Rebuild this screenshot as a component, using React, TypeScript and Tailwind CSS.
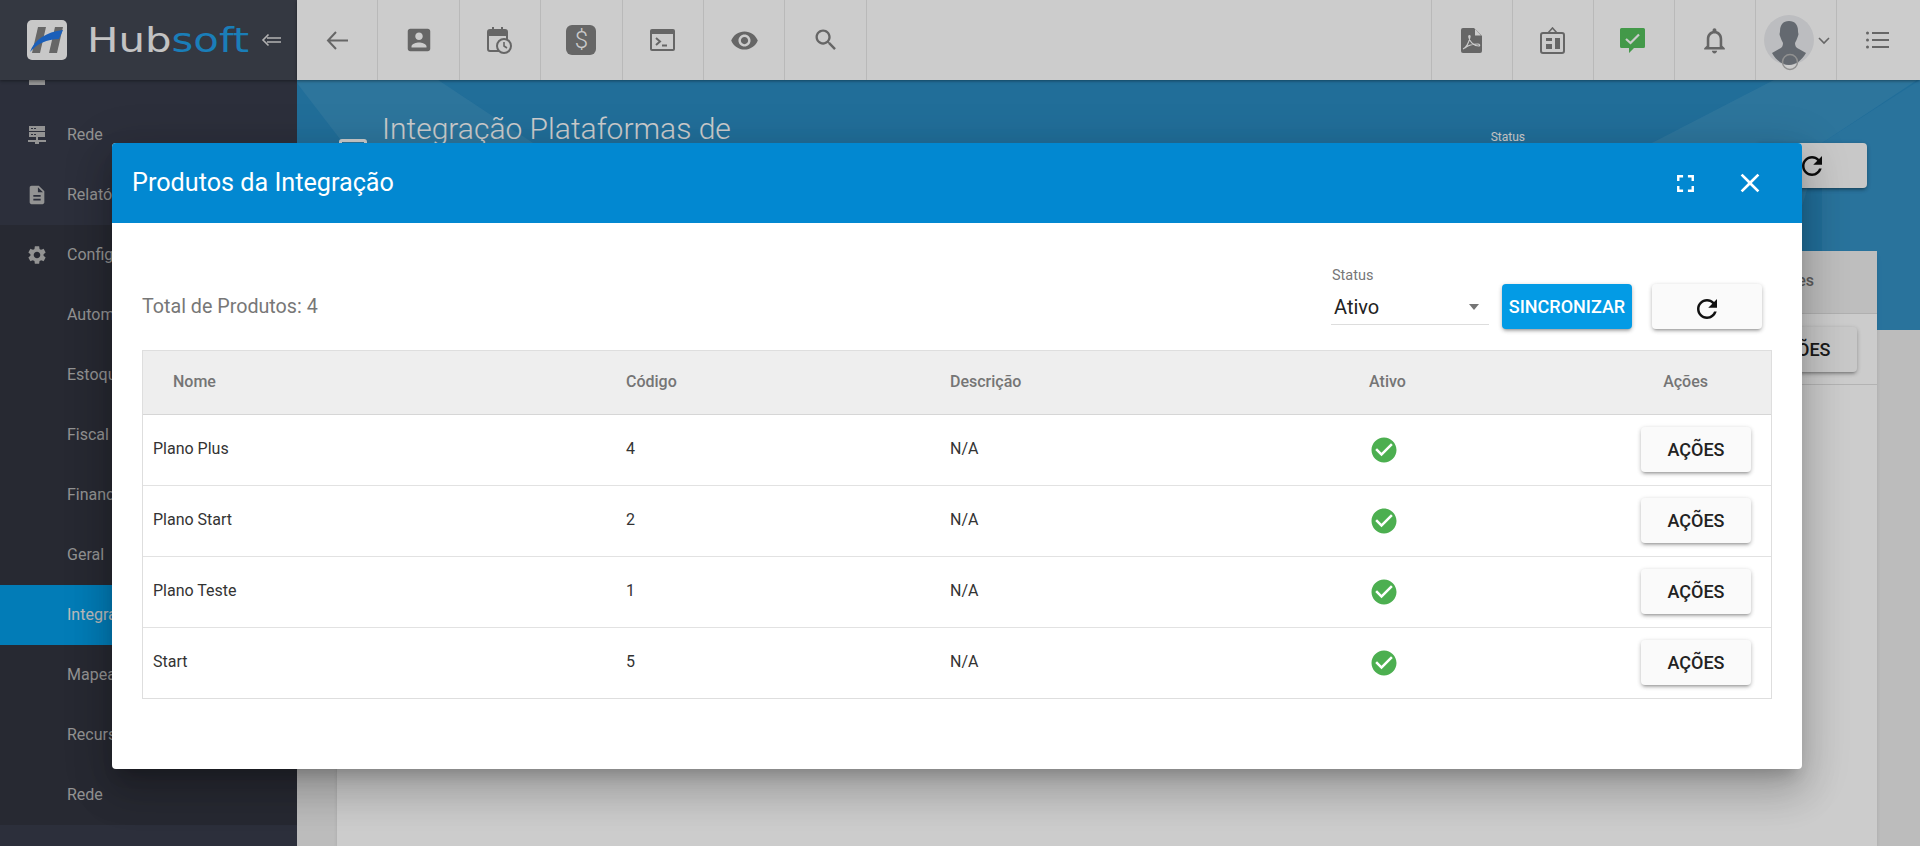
const gray = '#808080';
const btnShadow = 'shadow-[0_3px_3px_-2px_rgba(0,0,0,0.25),0_2px_4px_0_rgba(0,0,0,0.16),0_1px_5px_0_rgba(0,0,0,0.12)]';

function MaterialIcon({ d, size = 24, fill = gray, className = '' }: { d: string; size?: number; fill?: string; className?: string }) {
  return (
    <svg width={size} height={size} viewBox="0 0 24 24" fill={fill} className={className}>
      <path d={d} />
    </svg>
  );
}

const paths = {
  account: 'M3 5v14c0 1.1.89 2 2 2h14c1.1 0 2-.9 2-2V5c0-1.1-.9-2-2-2H5c-1.11 0-2 .9-2 2zm12 4c0 1.66-1.34 3-3 3s-3-1.34-3-3 1.34-3 3-3 3 1.34 3 3zm-9 8c0-2 4-3.1 6-3.1s6 1.1 6 3.1v1H6v-1z',
  eye: 'M12 4.5C7 4.5 2.73 7.61 1 12c1.73 4.39 6 7.5 11 7.5s9.27-3.11 11-7.5c-1.73-4.39-6-7.5-11-7.5zM12 17c-2.76 0-5-2.24-5-5s2.24-5 5-5 5 2.24 5 5-2.24 5-5 5zm0-8c-1.66 0-3 1.34-3 3s1.34 3 3 3 3-1.34 3-3-1.34-3-3-3z',
  search: 'M15.5 14h-.79l-.28-.27C15.41 12.59 16 11.11 16 9.5 16 5.91 13.09 3 9.5 3S3 5.91 3 9.5 5.91 16 9.5 16c1.61 0 3.09-.59 4.23-1.57l.27.28v.79l5 4.99L20.49 19l-4.99-5zm-6 0C7.01 14 5 11.99 5 9.5S7.01 5 9.5 5 14 7.01 14 9.5 11.99 14 9.5 14z',
  bell: 'M12 22c1.1 0 2-.9 2-2h-4c0 1.1.9 2 2 2zm6-6v-5c0-3.07-1.63-5.64-4.5-6.32V4c0-.83-.67-1.5-1.5-1.5s-1.5.67-1.5 1.5v.68C7.64 5.36 6 7.92 6 11v5l-2 2v1h16v-1l-2-2zm-2 1H8v-6c0-2.48 1.51-4.5 4-4.5s4 2.02 4 4.5v6z',
  refresh: 'M17.65 6.35C16.2 4.9 14.21 4 12 4c-4.42 0-7.99 3.58-7.99 8s3.57 8 7.99 8c3.73 0 6.84-2.55 7.73-6h-2.08c-.82 2.33-3.04 4-5.65 4-3.31 0-6-2.69-6-6s2.69-6 6-6c1.66 0 3.14.69 4.22 1.78L13 11h7V4l-2.35 2.35z',
  check: 'M12 2C6.48 2 2 6.48 2 12s4.48 10 10 10 10-4.48 10-10S17.52 2 12 2zm-2 15l-5-5 1.41-1.41L10 14.17l7.59-7.59L19 8l-9 9z',
  doc: 'M14 2H6c-1.1 0-1.99.9-1.99 2L4 20c0 1.1.89 2 1.99 2H18c1.1 0 2-.9 2-2V8l-6-6zm2 16H8v-2h8v2zm0-4H8v-2h8v2zm-3-5V3.5L18.5 9H13z',
  gear: 'M19.14 12.94c.04-.3.06-.61.06-.94 0-.32-.02-.64-.07-.94l2.03-1.58c.18-.14.23-.41.12-.61l-1.92-3.32c-.12-.22-.37-.29-.59-.22l-2.39.96c-.5-.38-1.03-.7-1.62-.94l-.36-2.54c-.04-.24-.24-.41-.48-.41h-3.84c-.24 0-.43.17-.47.41l-.36 2.54c-.59.24-1.13.57-1.62.94l-2.39-.96c-.22-.08-.47 0-.59.22L2.74 8.87c-.12.21-.08.47.12.61l2.03 1.58c-.05.3-.09.63-.09.94s.02.64.07.94l-2.03 1.58c-.18.14-.23.41-.12.61l1.92 3.32c.12.22.37.29.59.22l2.39-.96c.5.38 1.03.7 1.62.94l.36 2.54c.05.24.24.41.48.41h3.84c.24 0 .44-.17.47-.41l.36-2.54c.59-.24 1.13-.56 1.62-.94l2.39.96c.22.08.47 0 .59-.22l1.92-3.32c.12-.22.07-.47-.12-.61l-2.01-1.58zM12 15.6c-1.98 0-3.6-1.62-3.6-3.6s1.62-3.6 3.6-3.6 3.6 1.62 3.6 3.6-1.62 3.6-3.6 3.6z',
  fullscreen: 'M7 14H5v5h5v-2H7v-3zm-2-4h2V7h3V5H5v5zm12 7h-3v2h5v-5h-2v3zM14 5v2h3v3h2V5h-5z',
  close: 'M19 6.41L17.59 5 12 10.59 6.41 5 5 6.41 10.59 12 5 17.59 6.41 19 12 13.41 17.59 19 19 17.59 13.41 12z',
};

function ServerIcon() {
  return (
    <svg width="18" height="18" viewBox="0 0 18 18" fill="#b8b8b8">
      <path fillRule="evenodd" d="M1 0h16v5H1zM3 2v1h2V2zM6 2v1h2V2zM1 6h16v5H1zM3 8v1h2V8zM6 8v1h2V8z" />
      <path d="M8 11h2v3h8v2h-7v2H7v-2H0v-2h8z" />
    </svg>
  );
}

function ClippedIcon() {
  return (
    <svg width="16" height="20" viewBox="0 0 16 20" fill="#b8b8b8">
      <path d="M0 0h16v20H0z" />
    </svg>
  );
}

function LogoMark() {
  return (
    <svg width="40" height="40" viewBox="0 0 40 40">
      <rect width="40" height="40" rx="5" fill="#fbfbfb" />
      <path d="M11 7h8l-6 26H5z" fill="#808080" />
      <path d="M28 7h8l-6 26h-8z" fill="#808080" />
      <path d="M3 32C7 20 19 12 36 10l-4 9C20 19 10 24 3 32z" fill="#2277e8" />
    </svg>
  );
}

function CalendarClock() {
  return (
    <svg width="25" height="27" viewBox="0 0 25 27" fill="none">
      <path d="M5 0h2v4H5zM14 0h2v4h-2z" fill={gray} />
      <rect x="1" y="3" width="19" height="21" rx="2" stroke={gray} strokeWidth="2" />
      <rect x="1" y="3" width="19" height="6" fill={gray} />
      <circle cx="17" cy="19" r="7" fill="#ffffff" stroke={gray} strokeWidth="2" />
      <path d="M17 15v4l3 2" stroke={gray} strokeWidth="1.6" />
    </svg>
  );
}

function TerminalIcon() {
  return (
    <svg width="25" height="22" viewBox="0 0 25 22" fill="none">
      <rect width="25" height="22" rx="2" fill={gray} />
      <rect x="2" y="5" width="21" height="15" fill="#ffffff" />
      <path d="M6 9l4 3.5L6 16" stroke={gray} strokeWidth="2" />
      <path d="M12 16.5h5" stroke={gray} strokeWidth="2" />
    </svg>
  );
}

function PdfIcon() {
  return (
    <svg width="21" height="25" viewBox="0 0 21 25" fill="none">
      <path d="M2 0h11l8 8v15a2 2 0 0 1-2 2H2a2 2 0 0 1-2-2V2a2 2 0 0 1 2-2z" fill={gray} />
      <path d="M14 1l6 6.5h-6z" fill="#ffffff" />
      <path d="M2 21c3-1 6-6 7-12 .4-2-1.5-2-1.2 0 .6 4 4 8.500 10 9 1.500 0 1-2-1-2-4 0-10 1.500-13 4" stroke="#ffffff" strokeWidth="1.2" />
    </svg>
  );
}

function BoardIcon() {
  return (
    <svg width="25" height="27" viewBox="0 0 25 27" fill="none">
      <rect x="1" y="6" width="23" height="20" rx="2" stroke={gray} strokeWidth="2" />
      <path d="M8 6l4.500-5L17 6" stroke={gray} strokeWidth="1.6" />
      <path d="M6 11h6v3H6zM6 17h6v5H6zM15 11h5v11h-5z" fill={gray} />
    </svg>
  );
}

function ChatCheck() {
  return (
    <svg width="25" height="25" viewBox="0 0 25 25" fill="none">
      <path d="M1.500 0h22A1.500 1.500 0 0 1 25 1.500v17a1.500 1.500 0 0 1-1.500 1.500H14l-5 5v-5H1.500A1.500 1.500 0 0 1 0 18.500v-17A1.500 1.500 0 0 1 1.500 0z" fill="#54c05c" />
      <path d="M6 11l4.500 4L19 6.500" stroke="#ffffff" strokeWidth="2.200" />
    </svg>
  );
}

function ListIcon() {
  return (
    <svg width="23" height="18" viewBox="0 0 23 18" fill={gray}>
      <circle cx="1.500" cy="2" r="1.500" />
      <circle cx="1.500" cy="9" r="1.500" />
      <circle cx="1.500" cy="16" r="1.500" />
      <path d="M6 1h17v2H6zM6 8h17v2H6zM6 15h17v2H6z" />
    </svg>
  );
}

function Avatar() {
  return (
    <svg width="50" height="56" viewBox="0 0 50 56" fill="none" className="mt-[15px] self-start">
      <circle cx="25" cy="25" r="25" fill="#ecedf0" />
      <path d="M25 6c6 0 9 4 9 10 0 2 1 3 0 5-1 3-2 5-3 7 0 3 1 5 4 6l7 4c-4 7-10 12-17 12S12 45 8 38l7-4c3-1 4-3 4-6-1-2-2-4-3-7-1-2 0-3 0-5 0-6 3-10 9-10z" fill="#7d848c" />
      <circle cx="26" cy="47" r="7.500" stroke="#b5b5b5" strokeWidth="1.500" />
    </svg>
  );
}

const sidebarTop = [
  { label: '', icon: <ClippedIcon /> },
  { label: 'Rede', icon: <ServerIcon /> },
  { label: 'Relatórios', icon: <MaterialIcon d={paths.doc} size={22} fill="#b8b8b8" /> },
];

const sidebarGroup = [
  { label: 'Configurações', icon: <MaterialIcon d={paths.gear} size={22} fill="#b8b8b8" /> },
  { label: 'Automação' },
  { label: 'Estoque' },
  { label: 'Fiscal' },
  { label: 'Financeiro' },
  { label: 'Geral' },
  { label: 'Integrações', active: true },
  { label: 'Mapeamento' },
  { label: 'Recursos' },
  { label: 'Rede' },
];

function SidebarItem({ label, icon, active }: { label: string; icon?: React.ReactNode; active?: boolean }) {
  return (
    <div className={`flex h-[60px] items-center text-[16px] text-[#b8b8b8] ${active ? 'bg-[#039be5] text-[#ececec]' : ''}`}>
      <div className="flex w-[67px] shrink-0 justify-center pl-[7px]">{icon}</div>
      <span className="truncate">{label}</span>
    </div>
  );
}

const produtos = [
  { nome: 'Plano Plus', codigo: '4' },
  { nome: 'Plano Start', codigo: '2' },
  { nome: 'Plano Teste', codigo: '1' },
  { nome: 'Start', codigo: '5' },
];

const gridCols = 'grid grid-cols-[473px_324px_340px_210px_281px] items-center';

export default function App() {
  return (
    <div className="relative flex h-[846px] w-[1920px] overflow-hidden bg-[#ececec] font-['Roboto',sans-serif]">
      {/* sidebar */}
      <aside className="z-10 flex h-full w-[297px] shrink-0 flex-col bg-[#373b4a]">
        <div className="relative z-10 flex h-[80px] shrink-0 items-center bg-[#424652] pr-[16px] pl-[27px] shadow-[0_1px_3px_rgba(0,0,0,0.4)]">
          <LogoMark />
          <span className="ml-[20px] origin-left scale-x-[1.23] font-['DejaVu_Sans',sans-serif] text-[34px] leading-none text-[#f4f4f4]">
            Hub<span className="text-[#219ee6]">soft</span>
          </span>
          <svg width="20" height="14" viewBox="0 0 20 14" fill="none" stroke="#e0e0e0" strokeWidth="1.600" className="ml-auto">
            <path d="M7.500 1.500L2 7l5.500 5.500" />
            <path d="M6 5h14M6 9h14" />
          </svg>
        </div>
        <div className="-mt-[35px]">
          {sidebarTop.map((item, i) => (
            <SidebarItem key={i} label={item.label} icon={item.icon} />
          ))}
        </div>
        <div className="bg-[#31343f]">
          {sidebarGroup.map((item) => (
            <SidebarItem key={item.label} label={item.label} icon={item.icon} active={item.active} />
          ))}
        </div>
      </aside>

      {/* main */}
      <main className="flex h-full min-w-0 flex-1 flex-col">
        <header className="relative z-10 flex h-[80px] shrink-0 items-stretch justify-between bg-white shadow-[0_1px_3px_rgba(0,0,0,0.4)]">
          <div className="flex">
            {[
              <svg key="back" width="22" height="19" viewBox="0 0 22 19" fill="none" stroke={gray} strokeWidth="2"><path d="M10 1L2 9.500 10 18M2 9.500h20" /></svg>,
              <MaterialIcon key="acc" d={paths.account} size={30} />,
              <CalendarClock key="cal" />,
              <div key="dollar" className="flex h-[30px] w-[30px] items-center justify-center rounded-[6px] bg-[#808080] text-[24px] leading-none font-light text-white">$</div>,
              <TerminalIcon key="term" />,
              <MaterialIcon key="eye" d={paths.eye} size={29} />,
              <MaterialIcon key="search" d={paths.search} size={28} />,
            ].map((icon, i) => (
              <div key={i} className="flex w-[81.4px] items-center justify-center border-r border-[#e8e8e8]">{icon}</div>
            ))}
          </div>
          <div className="flex">
            <div className="flex w-[81px] items-center justify-center border-l border-[#e8e8e8] pr-[2px]"><PdfIcon /></div>
            <div className="flex w-[81px] items-center justify-center border-l border-[#e8e8e8] pr-[2px]"><BoardIcon /></div>
            <div className="flex w-[81px] items-center justify-center border-l border-[#e8e8e8] pr-[3px]"><ChatCheck /></div>
            <div className="flex w-[81px] items-center justify-center border-l border-[#e8e8e8] pr-[2px]"><MaterialIcon d={paths.bell} size={31} /></div>
            <div className="flex w-[81px] justify-center gap-[4px] border-l border-[#e8e8e8] pl-[2px]">
              <Avatar />
              <svg width="12" height="8" viewBox="0 0 12 8" fill="none" stroke={gray} strokeWidth="1.600" className="mt-[37px]"><path d="M1 1l5 5 5-5" /></svg>
            </div>
            <div className="flex w-[84px] items-center justify-center border-l border-[#e8e8e8] pr-[3px]"><ListIcon /></div>
          </div>
        </header>

        {/* blue banner */}
        <section className="relative h-[250px] shrink-0 overflow-hidden bg-[#2a8ac0]">
          <svg width="1623" height="250" viewBox="0 0 1623 250" className="absolute top-0 left-0">
            <path d="M0 0h141l95 63 140 187H190L0 3z" fill="#4097c6" opacity="0.7" />
            <path d="M1477 0h143l-95 63-60 187h-130l20-187z" fill="#4097c6" opacity="0.7" />
            <path d="M1525 63L1623 0v250h-98z" fill="#3490c4" />
          </svg>
          <div className="relative flex pt-[31px] pl-[42px]">
            <div className="mt-[28px] h-[28px] w-[28px] rounded-[3px] border-[3px] border-white" />
            <h1 className="ml-[15px] w-[500px] text-[30px] leading-[36px] font-light text-white">Integração Plataformas de pagamento</h1>
            <div className="ml-auto flex items-start pr-[53px]">
              <span className="mt-[19px] text-[12px] leading-[14px] text-white">Status</span>
              <button className={`mt-[32px] ml-[232px] flex h-[45px] w-[110px] items-center justify-center rounded-[4px] bg-[#fafafa] ${btnShadow}`}>
                <MaterialIcon d={paths.refresh} size={30} fill="#111111" />
              </button>
            </div>
          </div>
        </section>

        {/* page card */}
        <section className="relative z-[1] mr-[43px] ml-[40px] -mt-[79px] flex-1 bg-white shadow-md">
          <div className="flex h-[63px] items-center justify-end border-b border-[#dddddd] bg-[#eeeeee] pr-[63px] pb-[2px] text-[16px] font-medium text-[#757575]">Ações</div>
          <div className="flex h-[71px] items-center justify-end border-b border-[#e0e0e0] pr-[20px]">
            <button className={`h-[45px] w-[110px] rounded-[4px] bg-[#fafafa] text-[18px] font-medium text-[#222222] ${btnShadow}`}>AÇÕES</button>
          </div>
        </section>
      </main>

      {/* backdrop */}
      <div className="absolute inset-0 z-20 bg-black/20" />

      {/* dialog */}
      <div className="absolute top-[143px] left-[112px] z-30 flex h-[626px] w-[1690px] flex-col overflow-hidden rounded-[4px] bg-white shadow-[0_11px_15px_-7px_rgba(0,0,0,0.2),0_24px_38px_3px_rgba(0,0,0,0.14),0_9px_46px_8px_rgba(0,0,0,0.12)]">
        <div className="flex h-[80px] shrink-0 items-center bg-[#0288d1] pl-[20px] text-white">
          <h2 className="text-[25.200px] font-normal">Produtos da Integração</h2>
          <MaterialIcon d={paths.fullscreen} size={29} fill="#ffffff" className="ml-auto" />
          <MaterialIcon d={paths.close} size={32} fill="#ffffff" className="mr-[36px] ml-[34px]" />
        </div>

        <div className="px-[30px] pt-[44px]">
          <div className="flex h-[62px] items-end pr-[10px]">
            <span className="mr-auto pb-[11px] text-[19.700px] leading-[23px] text-[#777777]">Total de Produtos: 4</span>
            <div className="mb-[4px] w-[158px] border-b border-[#dddddd]">
              <div className="pl-[1px] text-[14.500px] leading-[16px] text-[#777777]">Status</div>
              <div className="flex h-[40px] items-center justify-between pt-[5px] pr-[10px] pl-[3px]">
                <span className="text-[20px] text-[#222222]">Ativo</span>
                <span className="h-0 w-0 border-x-[5px] border-t-[6px] border-x-transparent border-t-[#757575]" />
              </div>
            </div>
            <button className={`ml-[13px] h-[45px] w-[130px] rounded-[4px] bg-[#039be5] text-[18px] font-medium text-white ${btnShadow}`}>SINCRONIZAR</button>
            <button className={`ml-[20px] flex h-[45px] w-[110px] items-center justify-center rounded-[4px] bg-[#fafafa] pt-[5px] ${btnShadow}`}>
              <MaterialIcon d={paths.refresh} size={30} fill="#111111" />
            </button>
          </div>

          <div className="mt-[21px] border border-[#dedede]">
            <div className={`${gridCols} h-[64px] border-b border-[#d6d6d6] bg-[#eeeeee] pb-[2px] text-[16px] font-medium text-[#757575]`}>
              <div className="pl-[30px]">Nome</div>
              <div className="pl-[10px]">Código</div>
              <div className="pl-[10px]">Descrição</div>
              <div className="pl-[5px] text-center">Ativo</div>
              <div className="pr-[63px] text-right">Ações</div>
            </div>
            {produtos.map((p, i) => (
              <div key={p.nome} className={`${gridCols} text-[16px] text-[#333333] ${i < produtos.length - 1 ? 'h-[71px] border-b border-[#e2e2e2]' : 'h-[70px]'}`}>
                <div className="pb-[2px] pl-[10px]">{p.nome}</div>
                <div className="pb-[2px] pl-[10px]">{p.codigo}</div>
                <div className="pb-[2px] pl-[10px]">N/A</div>
                <div className="flex justify-center pr-[2px]">
                  <MaterialIcon d={paths.check} size={30} fill="#4caf50" />
                </div>
                <div className="flex justify-end pr-[20px] pb-[1px]">
                  <button className={`h-[45px] w-[110px] rounded-[4px] bg-[#fafafa] text-[18px] font-medium text-[#222222] ${btnShadow}`}>AÇÕES</button>
                </div>
              </div>
            ))}
          </div>
        </div>
      </div>
    </div>
  );
}
